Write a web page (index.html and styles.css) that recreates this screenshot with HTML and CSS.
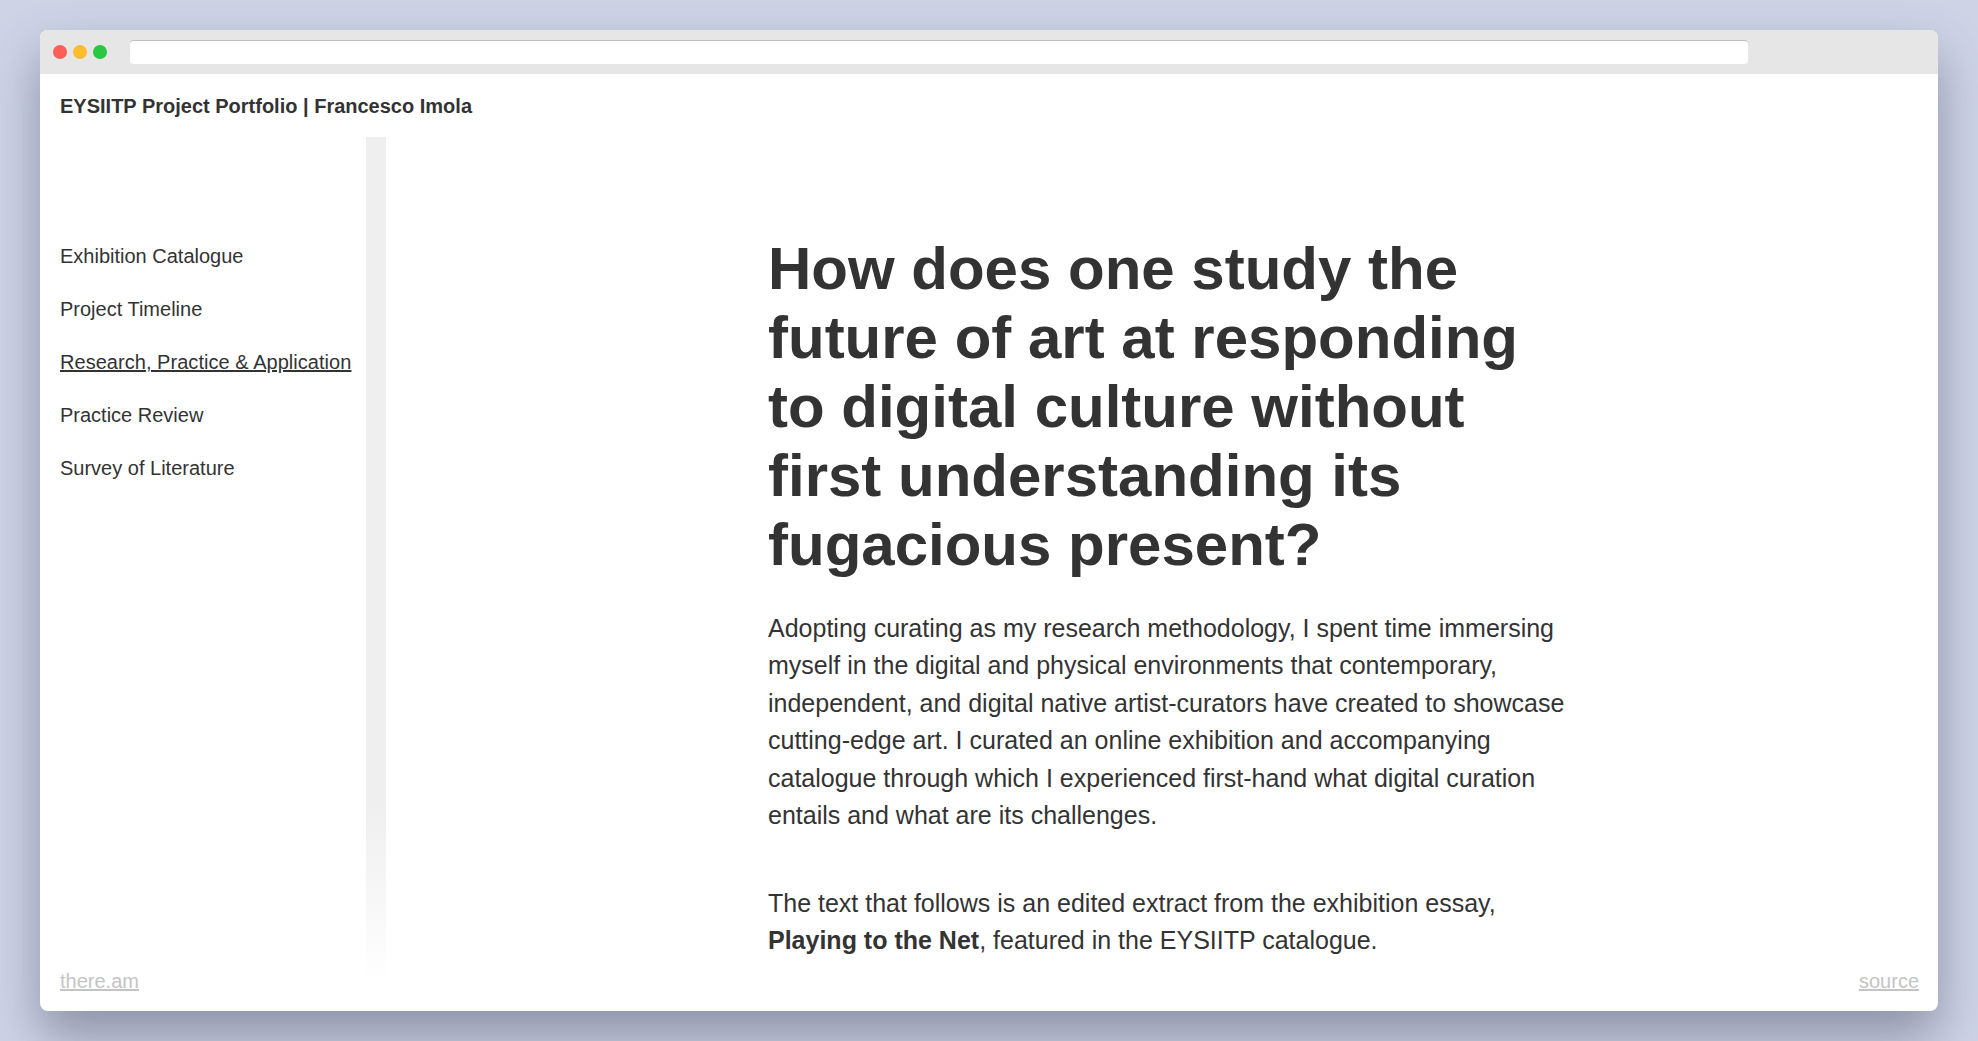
FILE: index.html
```html
<!DOCTYPE html>
<html lang="en">
<head>
    <meta charset="UTF-8">
    <title>EYSIITP Project Portfolio | Francesco Imola</title>
    <link rel="stylesheet" href="styles.css">
</head>
<body>

<div class="window">
    <!-- Browser chrome -->
    <div class="titlebar">
        <div class="lights">
            <span class="light red"></span>
            <span class="light yellow"></span>
            <span class="light green"></span>
        </div>
        <div class="addressbar"></div>
    </div>

    <div class="page">
        <div class="site-title">EYSIITP Project Portfolio | Francesco Imola</div>

        <div class="columns">
            <nav class="sidebar">
                <a href="#">Exhibition Catalogue</a>
                <a href="#">Project Timeline</a>
                <a href="#" class="active">Research, Practice &amp; Application</a>
                <a href="#">Practice Review</a>
                <a href="#">Survey of Literature</a>
            </nav>
            <div class="scrollbar"></div>

            <main class="content">
                <h1>How does one study the future of art at responding to digital culture without first understanding its fugacious present?</h1>
                <p>Adopting curating as my research methodology, I spent time immersing myself in the digital and physical environments that contemporary, independent, and digital native artist-curators have created to showcase cutting-edge art. I curated an online exhibition and accompanying catalogue through which I experienced first-hand what digital curation entails and what are its challenges.</p>
                <p>The text that follows is an edited extract from the exhibition essay, <strong>Playing to the Net</strong>, featured in the EYSIITP catalogue.</p>
            </main>
        </div>

        <a href="#" class="corner-link left">there.am</a>
        <a href="#" class="corner-link right">source</a>
    </div>
</div>

</body>
</html>
```

FILE: styles.css
```css
html, body {
    height: 100%;
}
body {
    margin: 0;
    padding: 30px 40px;
    box-sizing: border-box;
    height: 1041px;
    overflow: hidden;
    background-color: #ced4e6;
    font-family: "Liberation Sans", Arial, sans-serif;
    color: #333;
}
.window {
    height: 981px;
    border-radius: 8px;
    overflow: hidden;
    display: flex;
    flex-direction: column;
    box-shadow: 0 25px 50px rgba(60, 65, 90, 0.45);
    background-color: #fff;
}
.titlebar {
    height: 44px;
    flex: none;
    display: flex;
    align-items: center;
    background-color: #e6e6e6;
    padding-left: 13px;
    padding-right: 190px;
}
.lights {
    display: flex;
    gap: 6px;
    width: 77px;
    flex: none;
}
.light {
    width: 14px;
    height: 14px;
    border-radius: 50%;
}
.red {
    background-color: #ff5f57;
}
.yellow {
    background-color: #febc2e;
}
.green {
    background-color: #28c840;
}
.addressbar {
    flex: 1;
    height: 23px;
    background-color: #fff;
    border-top: 1px solid #bdbdbd;
    border-radius: 4px;
}
.page {
    position: relative;
    flex: 1;
    display: flex;
    flex-direction: column;
    min-height: 0;
}
.site-title {
    height: 63px;
    flex: none;
    padding-left: 20px;
    font-size: 20px;
    font-weight: bold;
    line-height: 64px;
}
.columns {
    flex: 1;
    display: flex;
    min-height: 0;
}
.sidebar {
    width: 326px;
    flex: none;
    box-sizing: border-box;
    padding: 107px 0 0 20px;
    display: flex;
    flex-direction: column;
    gap: 29px;
    font-size: 20px;
    line-height: 24px;
}
.sidebar a {
    color: #333;
    text-decoration: none;
}
.sidebar a.active {
    text-decoration: underline;
    letter-spacing: 0.04px;
}
.scrollbar {
    width: 20px;
    flex: none;
    height: 848px;
    background: linear-gradient(to bottom, #efefef 0%, #efefef 79%, #fff 100%);
}
.content {
    margin-left: 382px;
    width: 800px;
    padding-top: 97px;
}
h1 {
    margin: 0 0 31px;
    font-size: 60px;
    line-height: 69px;
    font-weight: bold;
}
.content p {
    margin: 0 0 50.4px;
    font-size: 25px;
    line-height: 37.4px;
}
.corner-link {
    position: absolute;
    bottom: 18px;
    font-size: 20px;
    line-height: 24px;
    color: #c4c4c4;
}
.left {
    left: 20px;
}
.right {
    right: 19px;
}
```
